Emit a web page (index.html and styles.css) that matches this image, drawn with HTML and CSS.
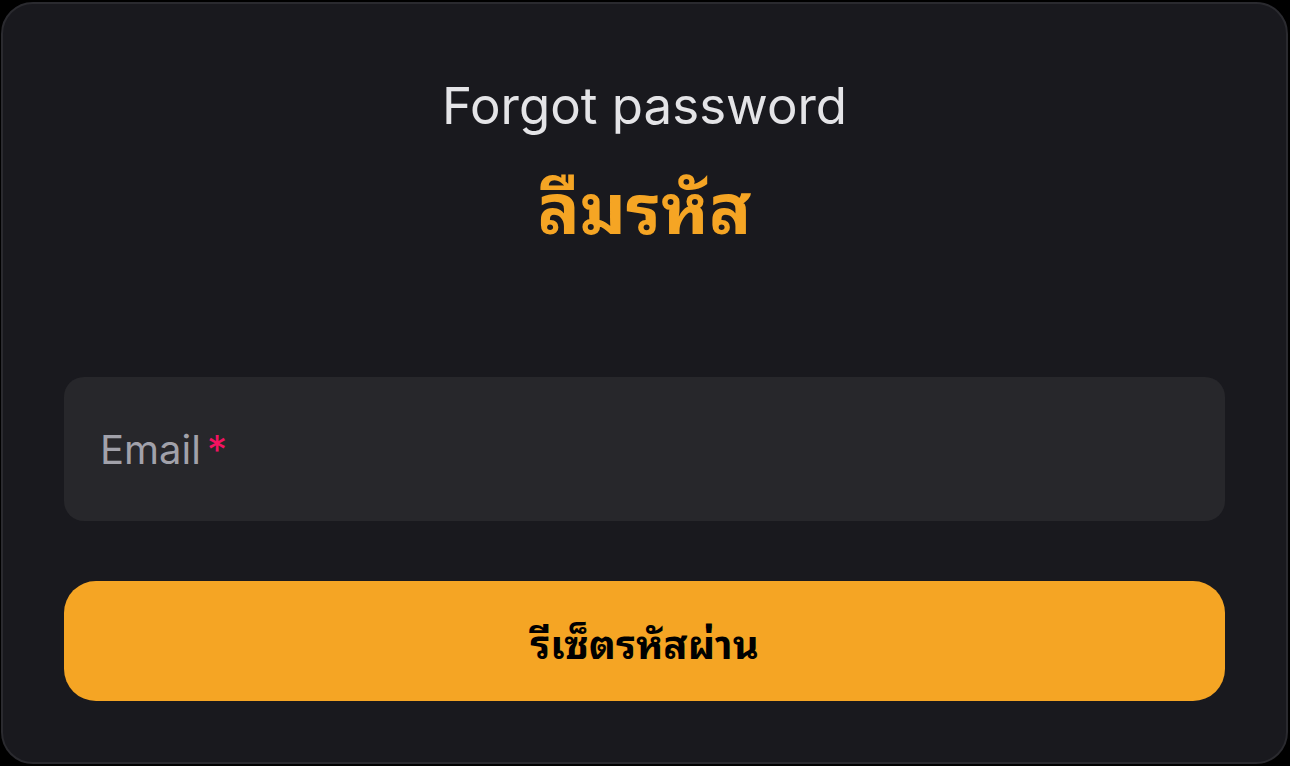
FILE: index.html
```html
<!DOCTYPE html>
<html lang="th">
<head>
  <meta charset="UTF-8" />
  <meta name="viewport" content="width=device-width, initial-scale=1" />
  <title>Forgot password</title>
  <link rel="stylesheet" href="styles.css">
</head>
<body>
  <div class="card">
    <div class="card-header">
      <p class="subtitle">Forgot password</p>
      <h1 class="title">ลืมรหัส</h1>
    </div>

    <form class="card-body">
      <label class="field">
        <span class="field-label">Email<span class="required">*</span></span>
        <input type="email" class="field-input" />
      </label>
      <button type="submit" class="btn-reset">รีเซ็ตรหัสผ่าน</button>
    </form>
  </div>
</body>
</html>
```

FILE: styles.css
```css
:root {
  --page-bg: #000000;
  --card-bg: #19191e;
  --card-border: #2a2a2f;
  --field-bg: #27272b;
  --label-color: #a1a1aa;
  --text-color: #e4e4e7;
  --warning: #f5a524;
  --danger: #f31260;
  --thai: "Noto Sans Thai Looped", "Noto Serif Thai", Loma, Garuda, Norasi, Waree, "Tlwg Typo", Sarabun;
}

* {
  box-sizing: border-box;
}

html, body {
  margin: 0;
  height: 100%;
}

body {
  background: var(--page-bg);
  font-family: Inter, var(--thai), "Noto Sans", sans-serif;
  padding: 2px 2px 2px 1px;
}

.card {
  height: 762px;
  background: var(--card-bg);
  border: 2px solid var(--card-border);
  border-radius: 32px;
  padding: 0 61px;
  display: flex;
  flex-direction: column;
}

.card-header {
  text-align: center;
  padding-top: 72px;
}

.subtitle {
  margin: 0;
  font-size: 51px;
  line-height: 60px;
  color: var(--text-color);
  font-weight: 400;
}

.title {
  margin: 0;
  padding-top: 31px;
  font-size: 70px;
  line-height: 84px;
  color: var(--warning);
  font-weight: 700;
}

.card-body {
  margin-top: 126px;
  display: flex;
  flex-direction: column;
  gap: 60px;
}

.field {
  height: 144px;
  background: var(--field-bg);
  border-radius: 20px;
  padding: 0 36px;
  display: flex;
  align-items: center;
  position: relative;
}

.field-label {
  font-size: 40px;
  color: var(--label-color);
}

.required {
  color: var(--danger);
  margin-left: 6px;
}

.field-input {
  position: absolute;
  inset: 0;
  opacity: 0;
  border: none;
}

.btn-reset {
  height: 120px;
  border: none;
  border-radius: 32px;
  background: var(--warning);
  color: #000;
  font-family: inherit;
  font-size: 40px;
  font-weight: 700;
  cursor: pointer;
}
```
